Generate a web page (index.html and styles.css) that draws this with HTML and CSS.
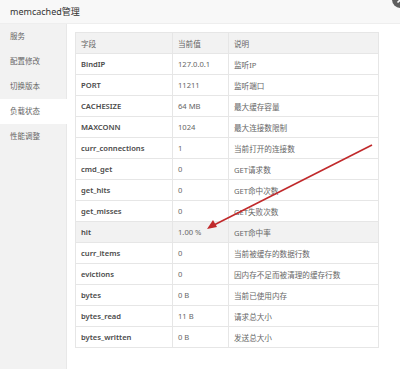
FILE: index.html
```html
<!DOCTYPE html>
<html lang="zh-CN">

<head>
  <meta charset="UTF-8">
  <meta name="viewport" content="width=device-width, initial-scale=1.0">
  <title>memcached管理</title>
  <link rel="stylesheet" href="styles.css">
</head>

<body>

  <div class="layer">
    <div class="layer-title">memcached管理</div>
    <svg class="layer-close" width="17" height="17" viewBox="0 0 17 17">
      <circle cx="8.5" cy="8.5" r="8.5" fill="#5f5f5f" />
      <path d="M5.5 5.5 L11.5 11.5 M11.5 5.5 L5.5 11.5" stroke="#fff" stroke-width="1.6" />
    </svg>

    <div class="layer-body">
      <ul class="tab-nav">
        <li>服务</li>
        <li>配置修改</li>
        <li>切换版本</li>
        <li class="active">负载状态</li>
        <li>性能调整</li>
      </ul>

      <div class="tab-content">
        <table class="status-table">
          <thead>
            <tr>
              <th class="col-key">字段</th>
              <th class="col-val">当前值</th>
              <th class="col-desc">说明</th>
            </tr>
          </thead>
          <tbody>
            <tr><td class="key">BindIP</td><td>127.0.0.1</td><td>监听IP</td></tr>
            <tr><td class="key">PORT</td><td>11211</td><td>监听端口</td></tr>
            <tr><td class="key">CACHESIZE</td><td>64 MB</td><td>最大缓存容量</td></tr>
            <tr><td class="key">MAXCONN</td><td>1024</td><td>最大连接数限制</td></tr>
            <tr><td class="key">curr_connections</td><td>1</td><td>当前打开的连接数</td></tr>
            <tr><td class="key">cmd_get</td><td>0</td><td>GET请求数</td></tr>
            <tr><td class="key">get_hits</td><td>0</td><td>GET命中次数</td></tr>
            <tr><td class="key">get_misses</td><td>0</td><td>GET失败次数</td></tr>
            <tr class="hover"><td class="key">hit</td><td>1.00 %</td><td>GET命中率</td></tr>
            <tr><td class="key">curr_items</td><td>0</td><td>当前被缓存的数据行数</td></tr>
            <tr><td class="key">evictions</td><td>0</td><td>因内存不足而被清理的缓存行数</td></tr>
            <tr><td class="key">bytes</td><td>0 B</td><td>当前已使用内存</td></tr>
            <tr><td class="key">bytes_read</td><td>11 B</td><td>请求总大小</td></tr>
            <tr><td class="key">bytes_written</td><td>0 B</td><td>发送总大小</td></tr>
          </tbody>
        </table>
      </div>
    </div>

    <!-- arrow drawn over the table -->
    <svg class="arrow" width="400" height="369" viewBox="0 0 400 369">
      <line x1="372" y1="145" x2="214" y2="225" stroke="#c0292b" stroke-width="1.6" />
      <polygon points="207,229 213,220 217,227" fill="#c0292b" />
    </svg>
  </div>

</body>

</html>
```

FILE: styles.css
```css
body {
  margin: 0;
  font-family: "Noto Sans", "Noto Sans CJK SC", sans-serif;
  background-color: #fff;
  overflow: hidden;
}

.layer {
  position: relative;
  width: 400px;
  height: 369px;
  overflow: hidden;
}

.layer-title {
  height: 24px;
  line-height: 24px;
  padding-left: 10px;
  background-color: #f8f8f8;
  border-bottom: 1px solid #eee;
  box-sizing: border-box;
  font-size: 9px;
  color: #333;
}

.layer-close {
  position: absolute;
  top: -9px;
  right: -9px;
}

.layer-body {
  display: flex;
  height: 345px;
}

.tab-nav {
  width: 66px;
  margin: 0;
  padding: 0;
  list-style: none;
  background-color: #f2f2f2;
  border-right: 1px solid #e8e8e8;
}

.tab-nav li {
  height: 25px;
  line-height: 25px;
  padding-left: 10px;
  font-size: 7.5px;
  color: #666;
}

.tab-nav li.active {
  background-color: #fff;
  margin-right: -1px;
}

.tab-content {
  flex: 1;
  padding: 8px 0 0 8px;
}

.status-table {
  width: 304px;
  border-collapse: collapse;
  table-layout: fixed;
  font-size: 7.6px;
  color: #666;
}

.status-table th,
.status-table td {
  height: 20px;
  padding: 0 5px;
  border: 1px solid #e6e6e6;
  text-align: left;
  font-weight: normal;
  white-space: nowrap;
}

.status-table thead tr {
  background-color: #f2f2f2;
}

.col-key {
  width: 86px;
}

.col-val {
  width: 45px;
}

.status-table td.key {
  font-weight: 600;
  color: #4a4a4a;
}

.status-table tr.hover {
  background-color: #f2f2f2;
}

.arrow {
  position: absolute;
  top: 0;
  left: 0;
  pointer-events: none;
}
```
